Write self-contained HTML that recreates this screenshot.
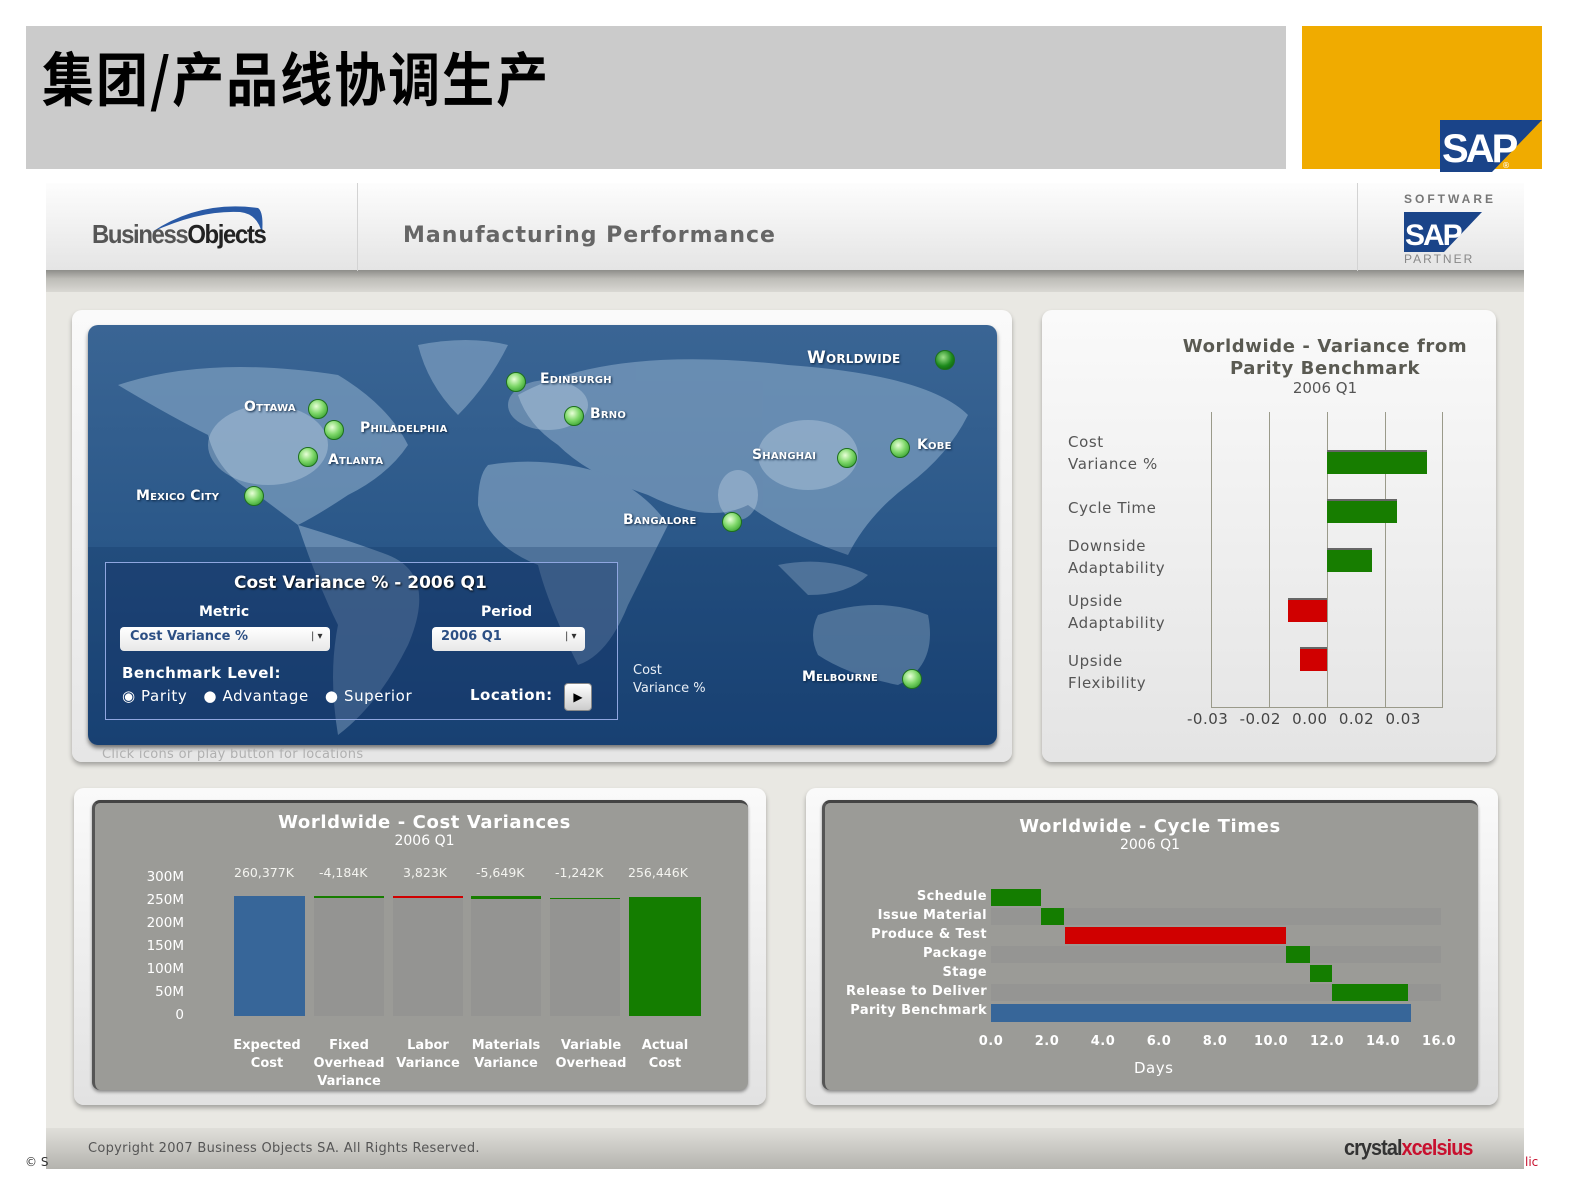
<!DOCTYPE html>
<html><head><meta charset="utf-8"><style>
*{margin:0;padding:0;box-sizing:border-box}
body{width:1587px;height:1190px;background:#fff;position:relative;overflow:hidden;font-family:"DejaVu Sans","Liberation Sans",sans-serif}
.a{position:absolute}
.t{position:absolute;white-space:nowrap}
.dot{position:absolute;width:20px;height:20px;border-radius:50%;background:radial-gradient(circle at 40% 35%,#e8ffd8,#7fd86a 45%,#2f9a2a 90%);border:1px solid #1d6f1d}
.city{position:absolute;color:#fff;font:bold 14px "DejaVu Sans",sans-serif;text-shadow:1px 1px 2px #0b2440;letter-spacing:.2px;font-variant:small-caps}
.gl{position:absolute;top:412px;height:295px;width:1px;background:#9a9a8a}
.rl{position:absolute;color:#555;font-size:15px;line-height:22px;letter-spacing:.6px}
.bv{position:absolute;color:#f4f4f0;font-size:12.5px}
.ya{position:absolute;color:#fff;font-size:13.5px;text-align:right;width:60px}
.xl{position:absolute;color:#fff;font:bold 13px "DejaVu Sans",sans-serif;text-align:center;line-height:18px;width:80px}
.gr{position:absolute;color:#fff;font:bold 13px "DejaVu Sans",sans-serif;text-align:right;width:170px;letter-spacing:.4px}
.gb{position:absolute;height:17px}
.dx{position:absolute;color:#fff;font:bold 13px "DejaVu Sans",sans-serif;width:50px;text-align:center;letter-spacing:.5px}
</style></head><body>
<div class="a" style="left:26px;top:26px;width:1260px;height:143px;background:#cbcbcb"></div>
<div class="t" style="left:42px;top:34px;font:bold 52px 'Noto Sans CJK SC',sans-serif;color:#000;letter-spacing:2px;transform:scaleY(1.12);transform-origin:top left">集团/产品线协调生产</div>
<div class="a" style="left:1302px;top:26px;width:240px;height:143px;background:#f0ab00"></div>
<svg class="a" style="left:1440px;top:120px" width="102" height="52"><polygon points="0,0 102,0 52,52 0,52" fill="#1a4489"/><text x="2" y="42" font-family="Liberation Sans" font-weight="bold" font-size="40" fill="#fff" letter-spacing="-3">SAP</text><text x="62" y="48" font-size="8" fill="#fff">®</text></svg>

<div class="a" style="left:46px;top:183px;width:1478px;height:986px;background:#e9e8e3"></div>
<div class="a" style="left:46px;top:183px;width:1478px;height:89px;background:linear-gradient(#fdfdfd,#eeeeee 60%,#e4e4e4)"></div>
<div class="a" style="left:46px;top:270px;width:1478px;height:22px;background:linear-gradient(#8d8d89,#bdbcb7 40%,#d9d8d3)"></div>
<div class="a" style="left:357px;top:183px;width:1px;height:88px;background:#d3d3d3"></div>
<div class="a" style="left:1357px;top:183px;width:1px;height:88px;background:#d3d3d3"></div>
<svg class="a" style="left:140px;top:200px" width="130" height="40"><path d="M12,32 Q60,0 118,8 Q124,12 122,34 Q118,14 100,12 Q60,10 12,32Z" fill="#2a5aa6"/></svg>
<div class="t" style="left:92px;top:219px;font:bold 26px 'Liberation Sans',sans-serif;color:#555;letter-spacing:-1.5px;transform:scaleX(.92);transform-origin:left">Business<span style="color:#222">Objects</span></div>
<div class="t" style="left:403px;top:223px;font:bold 22px 'DejaVu Sans',sans-serif;color:#666;letter-spacing:1px">Manufacturing Performance</div>
<div class="t" style="left:1404px;top:192px;font:bold 12px 'Liberation Sans';color:#777;letter-spacing:3px">SOFTWARE</div>
<svg class="a" style="left:1404px;top:212px" width="78" height="40"><polygon points="0,0 78,0 40,40 0,40" fill="#1a4489"/><text x="1" y="33" font-family="Liberation Sans" font-weight="bold" font-size="30" fill="#fff" letter-spacing="-2">SAP</text></svg>
<div class="t" style="left:1404px;top:252px;font:12px 'Liberation Sans';color:#888;letter-spacing:2px">PARTNER</div>

<div class="a" style="left:72px;top:310px;width:940px;height:452px;background:linear-gradient(#fafafa,#e6e6e6);border-radius:10px;box-shadow:0 3px 5px rgba(0,0,0,.3)"></div>
<div class="a" style="left:88px;top:325px;width:909px;height:420px;border-radius:10px;overflow:hidden;background:linear-gradient(#3a6594,#2b5889 50%,#1c467a);box-shadow:0 3px 4px rgba(0,0,0,.5)">
<svg width="909" height="420" style="position:absolute;left:0;top:0">
<g fill="#7e9fc0" opacity=".7">
<path d="M30,60 Q120,30 250,50 Q300,80 320,120 Q300,150 260,170 Q230,190 210,200 Q190,185 170,170 Q130,150 120,110 Q80,90 30,60Z"/>
<path d="M210,200 Q260,215 300,230 Q350,250 320,320 Q290,380 250,410 Q240,350 250,300 Q230,260 210,200Z"/>
<path d="M330,20 Q380,10 420,20 Q400,60 370,90 Q340,60 330,20Z"/>
<path d="M430,70 Q520,20 700,40 Q840,50 880,90 Q860,130 820,160 Q780,190 760,230 Q700,210 660,180 Q620,200 560,170 Q500,150 470,120 Q440,100 430,70Z"/>
<path d="M400,140 Q460,130 520,150 Q560,170 580,200 Q560,240 540,280 Q520,330 490,340 Q460,280 450,240 Q400,220 390,180 Q390,150 400,140Z"/>
<path d="M690,240 Q740,230 780,250 Q760,270 720,270Z"/>
<path d="M730,290 Q790,270 840,290 Q850,340 810,360 Q760,350 730,330 Q720,310 730,290Z"/>
</g>
<g fill="#dfeaf5" opacity=".3">
<ellipse cx="180" cy="120" rx="60" ry="40"/><ellipse cx="460" cy="80" rx="40" ry="25"/><ellipse cx="720" cy="130" rx="50" ry="35"/><ellipse cx="650" cy="170" rx="20" ry="25"/>
</g>
<rect x="0" y="222" width="909" height="198" fill="#0d2f5c" opacity=".25"/>
</svg>
</div>
<div class="dot" style="left:935px;top:350px;background:radial-gradient(circle at 40% 35%,#9ee08a,#1c8a1c 55%,#0a4f0a)"></div>
<div class="city" style="left:807px;top:348px;font-size:17px">Worldwide</div>
<div class="dot" style="left:506px;top:372px"></div><div class="city" style="left:540px;top:371px">Edinburgh</div>
<div class="dot" style="left:308px;top:399px"></div><div class="city" style="left:244px;top:399px">Ottawa</div>
<div class="dot" style="left:324px;top:420px"></div><div class="city" style="left:360px;top:420px">Philadelphia</div>
<div class="dot" style="left:564px;top:406px"></div><div class="city" style="left:590px;top:406px">Brno</div>
<div class="dot" style="left:298px;top:447px"></div><div class="city" style="left:328px;top:452px">Atlanta</div>
<div class="dot" style="left:837px;top:448px"></div><div class="city" style="left:752px;top:447px">Shanghai</div>
<div class="dot" style="left:890px;top:438px"></div><div class="city" style="left:917px;top:437px">Kobe</div>
<div class="dot" style="left:244px;top:486px"></div><div class="city" style="left:136px;top:488px">Mexico City</div>
<div class="dot" style="left:722px;top:512px"></div><div class="city" style="left:623px;top:512px">Bangalore</div>
<div class="dot" style="left:902px;top:669px"></div><div class="city" style="left:802px;top:669px">Melbourne</div>
<div class="t" style="left:633px;top:662px;color:#e8eef6;font-size:13px;line-height:18px">Cost<br>Variance %</div>

<div class="a" style="left:105px;top:562px;width:513px;height:158px;border:1px solid #8fa6e0;background:rgba(20,50,100,.35)"></div>
<div class="t" style="left:234px;top:573px;color:#fff;font:bold 17px 'DejaVu Sans';text-shadow:1px 1px 2px #000">Cost Variance % - 2006 Q1</div>
<div class="t" style="left:199px;top:604px;color:#fff;font:bold 14px 'DejaVu Sans'">Metric</div>
<div class="t" style="left:481px;top:604px;color:#fff;font:bold 14px 'DejaVu Sans'">Period</div>
<div class="a" style="left:120px;top:627px;width:210px;height:24px;background:linear-gradient(#fff,#e8e8e8);border-radius:4px"></div>
<div class="t" style="left:130px;top:629px;color:#2c4f84;font:bold 13px 'DejaVu Sans'">Cost Variance %</div>
<div class="t" style="left:311px;top:631px;color:#333;font-size:10px">| ▾</div>
<div class="a" style="left:432px;top:627px;width:153px;height:24px;background:linear-gradient(#fff,#e8e8e8);border-radius:4px"></div>
<div class="t" style="left:441px;top:629px;color:#2c4f84;font:bold 13px 'DejaVu Sans'">2006 Q1</div>
<div class="t" style="left:565px;top:631px;color:#333;font-size:10px">| ▾</div>
<div class="t" style="left:122px;top:664px;color:#fff;font:bold 15px 'DejaVu Sans';letter-spacing:.5px">Benchmark Level:</div>
<div class="t" style="left:122px;top:687px;color:#fff;font-size:15px;letter-spacing:.6px">◉ Parity &nbsp;&nbsp;● Advantage &nbsp;&nbsp;● Superior</div>
<div class="t" style="left:470px;top:686px;color:#fff;font:bold 15px 'DejaVu Sans';letter-spacing:.5px">Location:</div>
<div class="a" style="left:564px;top:683px;width:28px;height:28px;border-radius:4px;background:linear-gradient(#fff,#ccc);border:1px solid #888;font-size:12px;text-align:center;line-height:26px">▶</div>
<div class="t" style="left:102px;top:747px;color:#b0b0b0;font-size:13px;letter-spacing:.3px">Click icons or play button for locations</div>

<div class="a" style="left:1042px;top:310px;width:454px;height:452px;background:linear-gradient(#fafafa,#e4e4e4);border-radius:10px;box-shadow:0 3px 5px rgba(0,0,0,.3)"></div>
<div class="t" style="left:1130px;top:336px;width:390px;text-align:center;color:#5a5a52;font:bold 18px 'DejaVu Sans';line-height:22px;letter-spacing:.6px">Worldwide - Variance from<br>Parity Benchmark</div>
<div class="t" style="left:1130px;top:379px;width:390px;text-align:center;color:#555;font-size:15px">2006 Q1</div>
<div class="gl" style="left:1211px"></div><div class="gl" style="left:1269px"></div><div class="gl" style="left:1327px"></div><div class="gl" style="left:1385px"></div><div class="gl" style="left:1442px"></div>
<div class="a" style="left:1211px;top:707px;width:232px;height:1px;background:#9a9a8a"></div>
<div class="a" style="left:1327px;top:450px;width:100px;height:24px;background:#177d00;border-top:2px solid #666"></div>
<div class="a" style="left:1327px;top:499px;width:70px;height:24px;background:#177d00;border-top:2px solid #666"></div>
<div class="a" style="left:1327px;top:548px;width:45px;height:24px;background:#177d00;border-top:2px solid #666"></div>
<div class="a" style="left:1288px;top:598px;width:39px;height:24px;background:#d00000;border-top:2px solid #666"></div>
<div class="a" style="left:1300px;top:647px;width:27px;height:24px;background:#d00000;border-top:2px solid #666"></div>
<div class="rl" style="left:1068px;top:431px">Cost<br>Variance %</div>
<div class="rl" style="left:1068px;top:497px">Cycle Time</div>
<div class="rl" style="left:1068px;top:535px">Downside<br>Adaptability</div>
<div class="rl" style="left:1068px;top:590px">Upside<br>Adaptability</div>
<div class="rl" style="left:1068px;top:650px">Upside<br>Flexibility</div>
<div class="t" style="left:1187px;top:710px;color:#444;font-size:15px;word-spacing:6px;letter-spacing:.5px">-0.03 -0.02 0.00 0.02 0.03</div>

<div class="a" style="left:74px;top:788px;width:692px;height:317px;background:linear-gradient(#fafafa,#e2e2e2);border-radius:10px;box-shadow:0 3px 5px rgba(0,0,0,.3)"></div>
<div class="a" style="left:92px;top:800px;width:656px;height:290px;background:#9b9b97;border-radius:8px;border-top:3px solid #444;border-left:3px solid #555;box-shadow:0 2px 3px rgba(0,0,0,.4)"></div>
<div class="t" style="left:92px;top:812px;width:665px;text-align:center;color:#fff;font:bold 18px 'DejaVu Sans';letter-spacing:.6px">Worldwide - Cost Variances</div>
<div class="t" style="left:92px;top:833px;width:665px;text-align:center;color:#fff;font-size:14px">2006 Q1</div>
<div class="ya" style="left:124px;top:869px">300M</div><div class="ya" style="left:124px;top:892px">250M</div><div class="ya" style="left:124px;top:915px">200M</div><div class="ya" style="left:124px;top:938px">150M</div><div class="ya" style="left:124px;top:961px">100M</div><div class="ya" style="left:124px;top:984px">50M</div><div class="ya" style="left:124px;top:1007px">0</div>
<div class="bv" style="left:234px;top:865px">260,377K</div><div class="bv" style="left:319px;top:865px">-4,184K</div><div class="bv" style="left:403px;top:865px">3,823K</div><div class="bv" style="left:476px;top:865px">-5,649K</div><div class="bv" style="left:555px;top:865px">-1,242K</div><div class="bv" style="left:628px;top:865px">256,446K</div>
<div class="a" style="left:234px;top:896px;width:71px;height:120px;background:#376699"></div>
<div class="a" style="left:314px;top:896px;width:70px;height:120px;background:#949492;border-top:2px solid #177d00"></div>
<div class="a" style="left:393px;top:896px;width:70px;height:120px;background:#949492;border-top:2px solid #d00000"></div>
<div class="a" style="left:471px;top:896px;width:70px;height:120px;background:#949492;border-top:3px solid #177d00"></div>
<div class="a" style="left:550px;top:898px;width:70px;height:118px;background:#949492;border-top:1px solid #177d00"></div>
<div class="a" style="left:629px;top:897px;width:72px;height:119px;background:#147d00"></div>
<div class="xl" style="left:227px;top:1037px">Expected<br>Cost</div>
<div class="xl" style="left:309px;top:1037px">Fixed<br>Overhead<br>Variance</div>
<div class="xl" style="left:388px;top:1037px">Labor<br>Variance</div>
<div class="xl" style="left:466px;top:1037px">Materials<br>Variance</div>
<div class="xl" style="left:551px;top:1037px">Variable<br>Overhead</div>
<div class="xl" style="left:625px;top:1037px">Actual<br>Cost</div>

<div class="a" style="left:806px;top:788px;width:692px;height:317px;background:linear-gradient(#fafafa,#e2e2e2);border-radius:10px;box-shadow:0 3px 5px rgba(0,0,0,.3)"></div>
<div class="a" style="left:822px;top:800px;width:656px;height:290px;background:#9b9b97;border-radius:8px;border-top:3px solid #444;border-left:3px solid #555;box-shadow:0 2px 3px rgba(0,0,0,.4)"></div>
<div class="t" style="left:822px;top:816px;width:656px;text-align:center;color:#fff;font:bold 18px 'DejaVu Sans';letter-spacing:.6px">Worldwide - Cycle Times</div>
<div class="t" style="left:822px;top:837px;width:656px;text-align:center;color:#fff;font-size:14px">2006 Q1</div>
<div class="a" style="left:991px;top:908px;width:450px;height:17px;background:#959593"></div>
<div class="a" style="left:991px;top:946px;width:450px;height:17px;background:#959593"></div>
<div class="a" style="left:991px;top:984px;width:450px;height:17px;background:#959593"></div>
<div class="gr" style="left:817px;top:889px">Schedule</div>
<div class="gr" style="left:817px;top:908px">Issue Material</div>
<div class="gr" style="left:817px;top:927px">Produce &amp; Test</div>
<div class="gr" style="left:817px;top:946px">Package</div>
<div class="gr" style="left:817px;top:965px">Stage</div>
<div class="gr" style="left:817px;top:984px">Release to Deliver</div>
<div class="gr" style="left:817px;top:1003px">Parity Benchmark</div>
<div class="gb" style="left:991px;top:889px;width:50px;background:#147d00"></div>
<div class="gb" style="left:1041px;top:908px;width:23px;background:#147d00"></div>
<div class="gb" style="left:1065px;top:927px;width:221px;background:#d00000"></div>
<div class="gb" style="left:1286px;top:946px;width:24px;background:#147d00"></div>
<div class="gb" style="left:1310px;top:965px;width:22px;background:#147d00"></div>
<div class="gb" style="left:1332px;top:984px;width:76px;background:#147d00"></div>
<div class="gb" style="left:991px;top:1004px;width:420px;height:18px;background:#376699"></div>
<div class="dx" style="left:966px;top:1034px">0.0</div><div class="dx" style="left:1022px;top:1034px">2.0</div><div class="dx" style="left:1078px;top:1034px">4.0</div><div class="dx" style="left:1134px;top:1034px">6.0</div><div class="dx" style="left:1190px;top:1034px">8.0</div><div class="dx" style="left:1246px;top:1034px">10.0</div><div class="dx" style="left:1302px;top:1034px">12.0</div><div class="dx" style="left:1358px;top:1034px">14.0</div><div class="dx" style="left:1414px;top:1034px">16.0</div>
<div class="t" style="left:1134px;top:1059px;color:#fff;font-size:15px;letter-spacing:.5px">Days</div>

<div class="a" style="left:46px;top:1128px;width:1478px;height:41px;background:linear-gradient(#e0dfda,#b4b3ae)"></div>
<div class="t" style="left:88px;top:1141px;color:#555;font-size:13px;letter-spacing:.3px">Copyright 2007 Business Objects SA. All Rights Reserved.</div>
<div class="t" style="left:1344px;top:1135px;font:bold 22px 'Liberation Sans';letter-spacing:-1px;color:#333;transform:scaleX(.9);transform-origin:left">crystal<span style="color:#c8102e">xcelsius</span></div>
<div class="t" style="left:25px;top:1155px;font-size:12px;color:#333">© S</div>
<div class="t" style="left:1525px;top:1155px;font-size:12px;color:#c8102e">lic</div>
</body></html>
